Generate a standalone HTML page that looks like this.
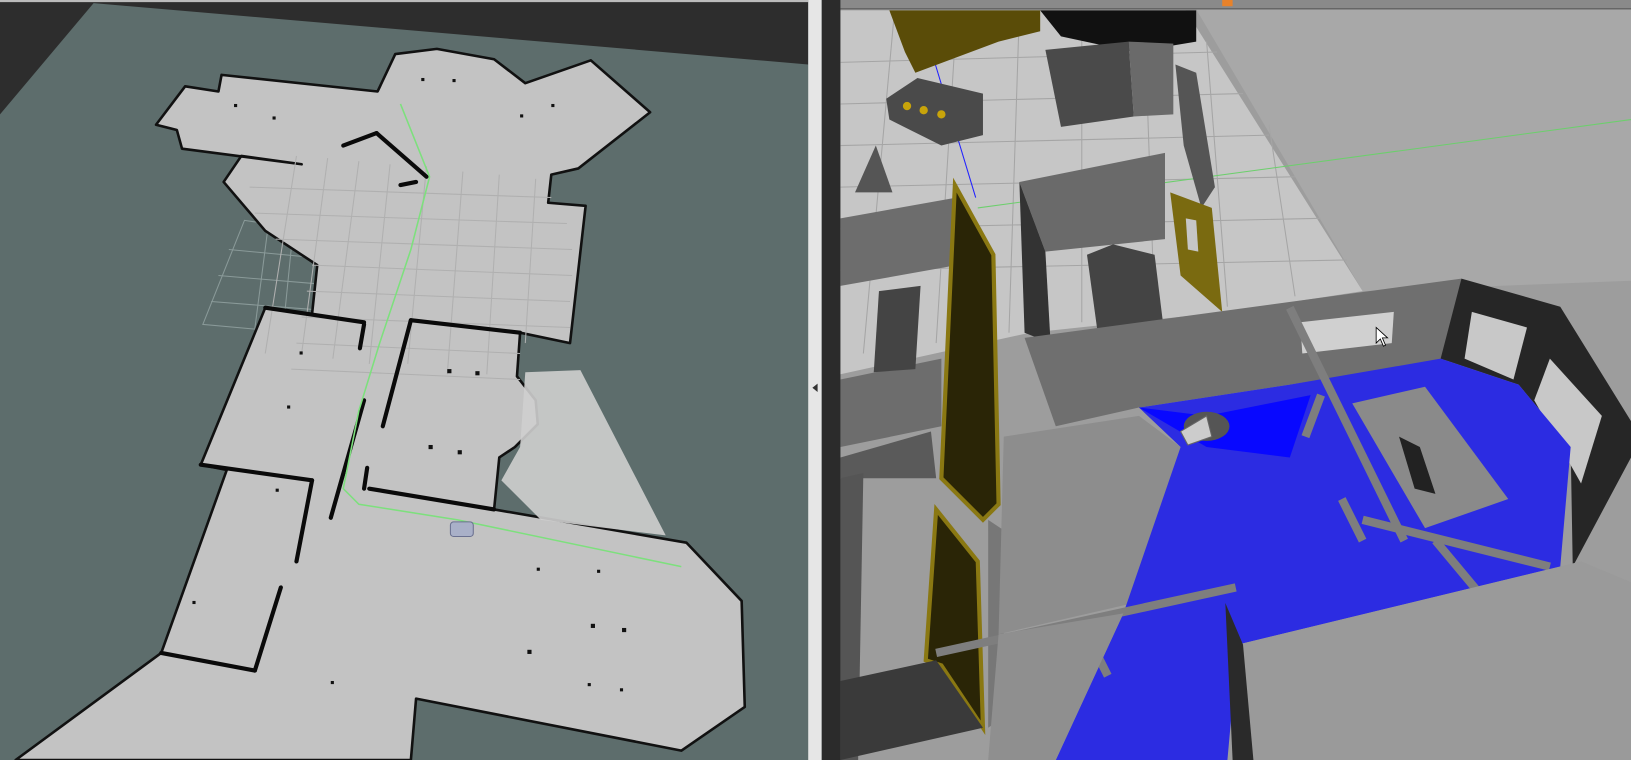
<!DOCTYPE html>
<html><head><meta charset="utf-8"><style>
html,body{margin:0;padding:0;width:1631px;height:760px;overflow:hidden;background:#5c6c6b;font-family:"Liberation Sans",sans-serif}
svg{display:block}
</style></head><body>
<svg width="1631" height="760" viewBox="0 0 1568 731" preserveAspectRatio="none">
<!-- LEFT PANEL -->
<rect x="0" y="0" width="777" height="731" fill="#5d6d6c"/>
<polygon points="0,0 777,0 777,62 90,3 0,110" fill="#2d2d2d"/>
<line x1="0" y1="1" x2="777" y2="1" stroke="#bbb" stroke-width="2"/>
<!-- faint grid in teal -->
<g stroke="#8a9a99" stroke-width="1" fill="none">
<polygon points="235,212 305,222 305,322 195,312"/>
<line x1="220" y1="240" x2="305" y2="248"/><line x1="210" y1="265" x2="305" y2="273"/><line x1="203" y1="290" x2="305" y2="298"/>
<line x1="258" y1="216" x2="245" y2="316"/><line x1="282" y1="219" x2="272" y2="319"/>
</g>
<!-- map -->
<polygon points="150,120 178,83 210,88 213,72 363,88 380,52 420,47 475,57 505,80 568,58 625,108 556,162 530,168 527,195 563,198 548,330 500,320 497,362 515,385 517,408 495,430 480,440 475,490 660,522 713,578 716,680 655,722 400,672 395,731 15,731 155,628 218,452 193,447 255,296 300,302 305,255 255,222 215,175 232,150 290,158 175,143 170,125" fill="#c3c3c3" stroke="#111" stroke-width="2.5" stroke-linejoin="round"/>
<polygon points="505,358 558,356 640,515 520,500 482,462 500,430" fill="#cfcfcf" opacity="0.9"/>
<!-- grid on map -->
<g stroke="#b0b0b0" stroke-width="1" fill="none">
<line x1="240" y1="180" x2="530" y2="190"/><line x1="245" y1="205" x2="545" y2="215"/><line x1="265" y1="230" x2="550" y2="240"/><line x1="300" y1="255" x2="550" y2="265"/><line x1="295" y1="280" x2="548" y2="290"/><line x1="290" y1="305" x2="548" y2="315"/><line x1="285" y1="330" x2="500" y2="340"/><line x1="280" y1="355" x2="500" y2="365"/>
<line x1="285" y1="150" x2="255" y2="340"/><line x1="315" y1="152" x2="290" y2="340"/><line x1="345" y1="155" x2="320" y2="345"/><line x1="375" y1="158" x2="355" y2="350"/><line x1="410" y1="160" x2="392" y2="350"/><line x1="445" y1="165" x2="430" y2="360"/><line x1="480" y1="168" x2="468" y2="360"/><line x1="515" y1="172" x2="505" y2="330"/>
</g>
<!-- walls -->
<g stroke="#0a0a0a" stroke-width="4" fill="none" stroke-linecap="round">
<line x1="255" y1="296" x2="350" y2="310"/><line x1="350" y1="312" x2="346" y2="335"/>
<line x1="395" y1="308" x2="500" y2="320"/><line x1="395" y1="308" x2="368" y2="410"/>
<line x1="355" y1="470" x2="475" y2="490"/><line x1="353" y1="450" x2="350" y2="470"/>
<line x1="193" y1="447" x2="300" y2="462"/><line x1="350" y1="385" x2="318" y2="498"/>
<line x1="300" y1="462" x2="285" y2="540"/><line x1="270" y1="565" x2="245" y2="645"/>
<line x1="155" y1="628" x2="245" y2="645"/><line x1="330" y1="140" x2="362" y2="128"/>
<line x1="362" y1="128" x2="410" y2="170"/><line x1="400" y1="175" x2="385" y2="178"/>
</g>
<!-- path -->
<polyline points="385,100 413,170 395,240 365,330 345,395 330,470 345,485 440,500 655,545" fill="none" stroke="#7de07d" stroke-width="1.5"/>
<!-- dots -->
<g fill="#111">
<rect x="405" y="75" width="3" height="3"/><rect x="435" y="76" width="3" height="3"/><rect x="225" y="100" width="3" height="3"/><rect x="262" y="112" width="3" height="3"/><rect x="500" y="110" width="3" height="3"/><rect x="530" y="100" width="3" height="3"/><rect x="288" y="338" width="3" height="3"/><rect x="276" y="390" width="3" height="3"/><rect x="430" y="355" width="4" height="4"/><rect x="457" y="357" width="4" height="4"/><rect x="412" y="428" width="4" height="4"/><rect x="440" y="433" width="4" height="4"/><rect x="516" y="546" width="3" height="3"/><rect x="574" y="548" width="3" height="3"/><rect x="568" y="600" width="4" height="4"/><rect x="598" y="604" width="4" height="4"/><rect x="507" y="625" width="4" height="4"/><rect x="318" y="655" width="3" height="3"/><rect x="565" y="657" width="3" height="3"/><rect x="596" y="662" width="3" height="3"/><rect x="185" y="578" width="3" height="3"/><rect x="265" y="470" width="3" height="3"/>
</g>
<rect x="433" y="502" width="22" height="14" rx="3" fill="#a9b0c8" stroke="#6a7090"/>
<!-- splitter -->
<rect x="777" y="0" width="13" height="731" fill="#e6e6e6"/>
<polygon points="781,373 786,369 786,377" fill="#333"/>
<rect x="790" y="0" width="18" height="731" fill="#2b2b2b"/>
<!-- RIGHT PANEL -->
<rect x="808" y="0" width="760" height="731" fill="#9d9d9d"/>
<polygon points="1150,9 1568,9 1568,270 1310,280" fill="#a8a8a8"/>
<rect x="808" y="0" width="760" height="9" fill="#8a8a8a"/>
<rect x="808" y="8" width="760" height="1" fill="#555"/>
<rect x="1175" y="0" width="10" height="6" fill="#e8822a"/>
<!-- floor tiles -->
<polygon points="808,10 1140,10 1310,280 1180,300 990,320 808,360" fill="#c6c6c6"/>
<g stroke="#a5a5a5" stroke-width="1">
<line x1="808" y1="60" x2="1170" y2="50"/><line x1="808" y1="100" x2="1195" y2="90"/><line x1="808" y1="140" x2="1220" y2="130"/><line x1="808" y1="180" x2="1245" y2="170"/><line x1="808" y1="220" x2="1270" y2="210"/><line x1="808" y1="260" x2="1295" y2="250"/>
<line x1="860" y1="10" x2="830" y2="340"/><line x1="920" y1="10" x2="900" y2="330"/><line x1="980" y1="10" x2="970" y2="320"/><line x1="1040" y1="10" x2="1040" y2="310"/><line x1="1100" y1="10" x2="1110" y2="300"/><line x1="1160" y1="40" x2="1180" y2="295"/><line x1="1220" y1="120" x2="1245" y2="285"/>
</g>
<line x1="940" y1="200" x2="1568" y2="115" stroke="#6ccf6c" stroke-width="1"/>
<line x1="885" y1="15" x2="938" y2="190" stroke="#2020ff" stroke-width="1"/>
<!-- top objects -->
<polygon points="855,10 1000,10 1000,30 960,40 880,70 870,50" fill="#5a4c08"/>
<polygon points="1000,10 1150,10 1150,40 1090,50 1020,35" fill="#111"/>
<polygon points="1005,48 1085,40 1090,112 1020,122" fill="#4a4a4a"/>
<polygon points="1085,40 1128,42 1128,110 1090,112" fill="#6a6a6a"/>
<polygon points="852,95 882,75 945,90 945,130 905,140 855,115" fill="#4a4a4a"/>
<circle cx="872" cy="102" r="4" fill="#c8a40a"/><circle cx="888" cy="106" r="4" fill="#c8a40a"/><circle cx="905" cy="110" r="4" fill="#c8a40a"/>
<polygon points="1130,62 1150,70 1168,180 1155,200 1138,140" fill="#555"/>
<polygon points="822,185 842,140 858,185" fill="#555"/>
<!-- room with table -->
<polygon points="980,175 1120,147 1120,230 1005,242" fill="#6a6a6a"/>
<polygon points="980,175 1005,242 1010,330 985,320" fill="#333"/>
<polygon points="1045,245 1070,235 1110,245 1118,310 1055,318" fill="#444"/>
<polygon points="1125,185 1165,200 1175,300 1135,265" fill="#7a6a10"/>
<polygon points="1140,210 1150,212 1152,242 1142,240" fill="#c6c6c6"/>
<!-- left rooms -->
<polygon points="808,210 920,190 920,255 808,275" fill="#6d6d6d"/>
<polygon points="808,365 905,345 905,410 808,430" fill="#6d6d6d"/>
<polygon points="845,280 885,275 880,355 840,358" fill="#444"/>
<polygon points="808,440 895,415 900,460 808,460" fill="#5a5a5a"/>
<polygon points="808,460 830,455 825,731 808,731" fill="#555"/>
<polygon points="918,178 955,245 960,485 945,500 905,460" fill="#2a2506" stroke="#8a7812" stroke-width="4"/>
<polygon points="900,490 940,540 945,700 905,640 890,635" fill="#2a2506" stroke="#8a7812" stroke-width="4"/>
<polygon points="808,655 900,635 945,700 808,731" fill="#3a3a3a"/>
<polygon points="950,500 965,510 965,690 950,700" fill="#777"/>
<!-- big wall -->
<polygon points="985,325 1405,268 1400,345 1240,370 1095,392 1015,410" fill="#6f6f6f"/>
<polygon points="1250,310 1340,300 1338,330 1252,340" fill="#d0d0d0"/>
<polygon points="1405,268 1500,295 1568,405 1568,440 1512,545 1510,430 1460,370 1385,345" fill="#262626"/>
<polygon points="1415,300 1468,315 1455,365 1408,345" fill="#c8c8c8"/>
<polygon points="1490,345 1540,400 1520,465 1475,385" fill="#c8c8c8"/>
<!-- floor ground under wall -->
<polygon points="965,420 1095,400 1135,430 1090,580 960,610" fill="#8d8d8d"/>
<!-- blue laser -->
<polygon points="1095,392 1240,370 1385,345 1460,370 1510,430 1500,545 1190,620 1180,731 1015,731 1080,590 1135,430" fill="#2c2ce2"/>
<polygon points="1095,392 1160,400 1260,380 1240,440 1160,430" fill="#0808ff"/>
<ellipse cx="1160" cy="410" rx="22" ry="14" fill="#555"/>
<polygon points="1135,415 1160,400 1165,420 1142,428" fill="#ccc" stroke="#666"/>
<!-- table and frames -->
<polygon points="1300,388 1370,372 1450,480 1370,508" fill="#8a8a8a"/>
<polygon points="1345,420 1365,430 1380,475 1360,470" fill="#222"/>
<g stroke="#7e7e7e" stroke-width="8" fill="none">
<line x1="1240" y1="296" x2="1350" y2="520"/><line x1="1270" y1="380" x2="1255" y2="420"/>
<line x1="1310" y1="500" x2="1490" y2="545"/><line x1="1380" y1="520" x2="1430" y2="580"/>
<line x1="900" y1="628" x2="1188" y2="565"/><line x1="1040" y1="600" x2="1065" y2="650"/>
<line x1="1290" y1="480" x2="1310" y2="520"/>
</g>
<polygon points="1190,620 1520,540 1568,560 1568,731 1200,731" fill="#9a9a9a"/>
<polygon points="1178,580 1195,620 1205,731 1185,731" fill="#2a2a2a"/>
<polygon points="960,610 1080,590 1015,731 950,731" fill="#8f8f8f"/>
<!-- cursor -->
<polygon points="1323,315 1323,330 1327,326 1330,333 1332,332 1329,325 1334,325" fill="#fff" stroke="#000" stroke-width="0.8"/>
</svg>
</body></html>
